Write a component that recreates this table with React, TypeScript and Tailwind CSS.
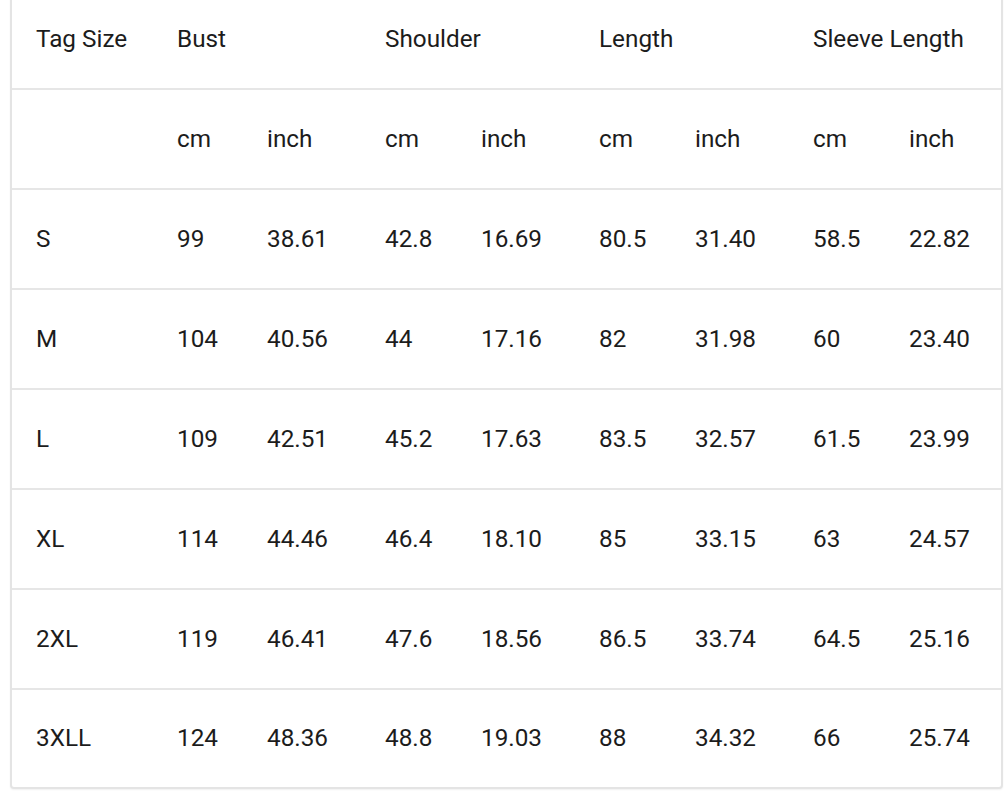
import React from 'react';

const header2 = ['', 'cm', 'inch', 'cm', 'inch', 'cm', 'inch', 'cm', 'inch'];

const rows: string[][] = [
    ['S', '99', '38.61', '42.8', '16.69', '80.5', '31.40', '58.5', '22.82'],
    ['M', '104', '40.56', '44', '17.16', '82', '31.98', '60', '23.40'],
    ['L', '109', '42.51', '45.2', '17.63', '83.5', '32.57', '61.5', '23.99'],
    ['XL', '114', '44.46', '46.4', '18.10', '85', '33.15', '63', '24.57'],
    ['2XL', '119', '46.41', '47.6', '18.56', '86.5', '33.74', '64.5', '25.16'],
    ['3XLL', '124', '48.36', '48.8', '19.03', '88', '34.32', '66', '25.74'],
];

const gridCols = 'grid grid-cols-[141px_90px_118px_96px_118px_96px_118px_96px_1fr] items-center pl-[24px]';

const App: React.FC = () => {
    return (
        <div className="min-h-[800px] w-[1005px] overflow-hidden bg-white">
            <div
                className="ml-[10px] mt-[-12px] w-[993px] rounded-[4px] border-2 border-[#e4e4e4] bg-white text-[24.3px] text-[#1c1c1c] shadow-[0_1px_2px_rgba(0,0,0,0.06)]"
                style={{ fontFamily: 'Roboto, "Liberation Sans", sans-serif' }}
            >
                {/* Top header */}
                <div className={`${gridCols} h-[100px] border-b-2 border-[#e6e6e6]`}>
                    <div>Tag Size</div>
                    <div className="col-span-2">Bust</div>
                    <div className="col-span-2">Shoulder</div>
                    <div className="col-span-2">Length</div>
                    <div className="col-span-2">Sleeve Length</div>
                </div>

                {/* Units */}
                <div className={`${gridCols} h-[100px] border-b-2 border-[#e6e6e6]`}>
                    {header2.map((h, i) => (
                        <div key={i}>{h}</div>
                    ))}
                </div>

                {/* Sizes */}
                {rows.map((row, r) => (
                    <div
                        key={row[0]}
                        className={`${gridCols} ${r === rows.length - 1 ? 'h-[97px]' : 'h-[100px] border-b-2 border-[#e6e6e6]'}`}
                    >
                        {row.map((cell, i) => (
                            <div key={i}>{cell}</div>
                        ))}
                    </div>
                ))}
            </div>
        </div>
    );
};

export default App;
